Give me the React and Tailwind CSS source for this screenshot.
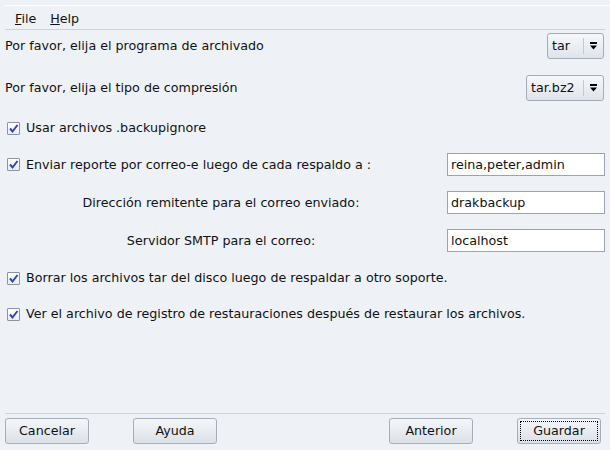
import React from 'react';

const font = { fontFamily: '"DejaVu Sans", "Liberation Sans", sans-serif' };

function Check() {
  return (
    <span className="w-[13px] h-[13px] shrink-0 border border-[#8b94a3] bg-gradient-to-b from-[#ffffff] to-[#e9edf2] rounded-[1px] flex items-center justify-center">
      <svg width="11" height="11" viewBox="0 0 11 11">
        <path d="M2 5.5 L4.5 8.5 L9.5 2" fill="none" stroke="#2f46b4" strokeWidth="2" />
      </svg>
    </span>
  );
}

function CheckRow({ label, className = '' }) {
  return (
    <div className={`flex items-center h-[20px] pl-[7px] gap-[6px] ${className}`}>
      <Check />
      <span>{label}</span>
    </div>
  );
}

function Combo({ value, width }) {
  return (
    <div className={`${width} h-[26px] flex items-stretch border border-[#a4acb8] rounded-[3px] bg-gradient-to-b from-[#f6f8fb] to-[#dfe4ea]`}>
      <span className="flex-1 flex items-center pl-[4px]">{value}</span>
      <span className="w-px my-[4px] bg-[#c4cad3]" />
      <span className="w-[19px] flex items-center justify-center">
        <svg width="9" height="8" viewBox="0 0 9 8">
          <rect x="1" y="0" width="7" height="2" fill="#000" />
          <path d="M1 3.5 H8 L4.5 7.5 Z" fill="#000" />
        </svg>
      </span>
    </div>
  );
}

function Field({ value }) {
  return (
    <div className="w-[158px] h-[23px] border border-[#9ca4af] bg-white flex items-center pl-[3px]">
      {value}
    </div>
  );
}

function Button({ label, focused }) {
  return (
    <button className="w-[84px] h-[26px] border border-[#a6aebb] rounded-[3px] bg-gradient-to-b from-[#f4f6f9] to-[#dce1e8] flex items-center justify-center p-[2px]">
      <span className={`w-full h-full flex items-center justify-center ${focused ? 'border border-dotted border-black' : ''}`}>
        {label}
      </span>
    </button>
  );
}

export default function App() {
  return (
    <div style={font} className="w-[610px] h-[450px] bg-[#eef1f6] text-[#111] text-[12.7px] flex flex-col overflow-hidden">
      {/* menu bar */}
      <div className="mt-[5px] ml-[5px] h-px bg-white" />
      <div className="h-[23px] flex items-center pt-[2px] pl-[15px] gap-[14px]">
        <span><span className="underline">F</span>ile</span>
        <span><span className="underline">H</span>elp</span>
      </div>
      <div className="ml-[5px] mr-[5px] h-px bg-[#cdd2da]" />

      {/* options */}
      <div className="flex items-center justify-between pl-[5px] pr-[6px] mt-[3px]">
        <span>Por favor, elija el programa de archivado</span>
        <Combo value="tar" width="w-[57px]" />
      </div>
      <div className="flex items-center justify-between pl-[5px] pr-[6px] mt-[16px]">
        <span>Por favor, elija el tipo de compresión</span>
        <Combo value="tar.bz2" width="w-[78px]" />
      </div>

      <CheckRow label="Usar archivos .backupignore" className="mt-[17px]" />

      <div className="flex items-center justify-between pr-[5px] mt-[15px]">
        <CheckRow label="Enviar reporte por correo-e luego de cada respaldo a :" />
        <Field value="reina,peter,admin" />
      </div>
      <div className="flex items-center pr-[5px] mt-[15px]">
        <span className="w-[432px] ml-[5px] text-center">Dirección remitente para el correo enviado:</span>
        <span className="flex-1" />
        <Field value="drakbackup" />
      </div>
      <div className="flex items-center pr-[5px] mt-[15px]">
        <span className="w-[432px] ml-[5px] text-center">Servidor SMTP para el correo:</span>
        <span className="flex-1" />
        <Field value="localhost" />
      </div>

      <CheckRow label="Borrar los archivos tar del disco luego de respaldar a otro soporte." className="mt-[16px]" />
      <CheckRow label="Ver el archivo de registro de restauraciones después de restaurar los archivos." className="mt-[16px]" />

      <div className="flex-1" />

      {/* buttons */}
      <div className="ml-[5px] mr-[5px] h-px bg-[#cdd2da]" />
      <div className="flex items-center pl-[5px] pr-[9px] mt-[4px] mb-[6px]">
        <Button label="Cancelar" />
        <span className="w-[44px]" />
        <Button label="Ayuda" />
        <span className="flex-1" />
        <Button label="Anterior" />
        <span className="w-[44px]" />
        <Button label="Guardar" focused />
      </div>
    </div>
  );
}
